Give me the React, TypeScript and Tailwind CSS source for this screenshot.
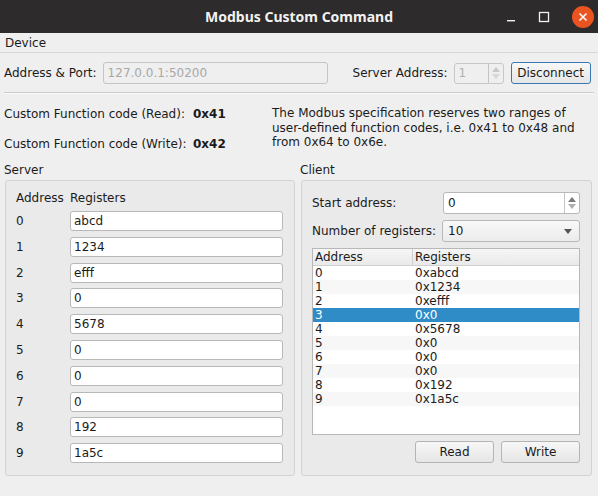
import React from 'react';

const serverRows = ['abcd', '1234', 'efff', '0', '5678', '0', '0', '0', '192', '1a5c'];
const clientRows = ['0xabcd', '0x1234', '0xefff', '0x0', '0x5678', '0x0', '0x0', '0x0', '0x192', '0x1a5c'];

// Small up/down arrows used by the spin boxes
const SpinArrows = ({ disabled }: { disabled?: boolean }) => (
  <div className="flex w-[15px] flex-col items-center justify-center gap-[2px] border-l border-[#c4c4c4]">
    <svg width="8" height="5" viewBox="0 0 8 5">
      <path d="M4 0 L8 5 L0 5 Z" fill={disabled ? '#c8c8c8' : '#7a7a7a'} />
    </svg>
    <svg width="8" height="5" viewBox="0 0 8 5">
      <path d="M0 0 L8 0 L4 5 Z" fill={disabled ? '#d6d6d6' : '#b0b0b0'} />
    </svg>
  </div>
);

const QButton = ({ label, focus, className }: { label: string; focus?: boolean; className?: string }) => (
  <div
    className={`flex items-center justify-center rounded-[3px] border bg-gradient-to-b from-[#f7f7f7] to-[#e6e6e6] ${
      focus ? 'border-[#3a78b5]' : 'border-[#b4b4b4]'
    } ${className ?? ''}`}
  >
    {label}
  </div>
);

export default function App() {
  return (
    <div
      className="flex h-[496px] w-[598px] flex-col overflow-hidden bg-[#efefef] text-[12px] text-[#1b1b1b]"
      style={{ fontFamily: '"DejaVu Sans", "Noto Sans", sans-serif' }}
    >
      {/* Window title bar */}
      <div className="grid h-[33px] shrink-0 grid-cols-[1fr_auto_1fr] items-center bg-[#2d2b2b]">
        <div />
        <div className="text-[14px] font-bold text-[#f2f2f2]" style={{ fontFamily: '"Noto Sans", "DejaVu Sans", sans-serif' }}>
          Modbus Custom Command
        </div>
        <div className="flex items-center justify-end gap-[22px] pr-[4px]">
          <svg width="10" height="10" viewBox="0 0 10 10">
            <rect x="1" y="8" width="8" height="1.4" fill="#f2f2f2" />
          </svg>
          <svg width="12" height="12" viewBox="0 0 12 12">
            <rect x="1.5" y="1.5" width="9" height="9" fill="none" stroke="#f2f2f2" strokeWidth="1.3" />
          </svg>
          <svg width="22" height="22" viewBox="0 0 22 22">
            <circle cx="11" cy="11" r="11" fill="#e95420" />
            <path d="M7.5 7.5 L14.5 14.5 M14.5 7.5 L7.5 14.5" stroke="#ffffff" strokeWidth="1.6" />
          </svg>
        </div>
      </div>

      {/* Menu bar */}
      <div className="flex h-[20px] shrink-0 items-center border-b border-[#d6d6d6] px-[5px]">Device</div>

      {/* Connection row */}
      <div className="mt-[9px] flex h-[22px] items-center px-[4px]">
        <span>Address &amp; Port:</span>
        <div className="ml-[6px] flex h-[22px] w-[225px] items-center rounded-[3px] border border-[#c4c4c4] bg-[#efefef] px-[4px] text-[#a8a8a8]">
          127.0.0.1:50200
        </div>
        <span className="ml-[25px]">Server Address:</span>
        <div className="ml-[6px] flex h-[21px] w-[50px] rounded-[3px] border border-[#c8c8c8] bg-[#efefef]">
          <div className="flex flex-1 items-center px-[4px] text-[#b0b0b0]">1</div>
          <SpinArrows disabled />
        </div>
        <QButton label="Disconnect" focus className="ml-[7px] h-[22px] w-[80px]" />
      </div>

      <div className="mx-[4px] mt-[8px] border-t border-[#cbcbcb] border-b border-b-[#fafafa]" />

      {/* Function codes */}
      <div className="mt-[13px] flex px-[4px]">
        <div className="flex w-[268px] flex-col gap-[16px]">
          <div className="flex h-[14px] items-center">
            <span className="w-[189px]">Custom Function code (Read):</span>
            <span className="font-bold">0x41</span>
          </div>
          <div className="flex h-[14px] items-center">
            <span className="w-[189px]">Custom Function code (Write):</span>
            <span className="font-bold">0x42</span>
          </div>
        </div>
        <p className="-mt-[1px] w-[322px] leading-[14.5px]">
          The Modbus specification reserves two ranges of user-defined function codes, i.e. 0x41 to 0x48 and from 0x64 to 0x6e.
        </p>
      </div>

      {/* Server / Client groups */}
      <div className="mt-[10px] flex gap-[6px] px-[5px]">
        {/* Server */}
        <div className="flex w-[290px] flex-col">
          <div className="-ml-[1px] h-[19px]">Server</div>
          <div className="h-[296px] rounded-[3px] border border-[#d2d2d2] bg-[#eaeaea] pl-[10px] pr-[11px] pt-[8px]">
            <div className="flex h-[17px] items-center">
              <span className="w-[54px]">Address</span>
              <span>Registers</span>
            </div>
            <div className="mt-[5px] flex flex-col gap-[5.8px]">
              {serverRows.map((v, i) => (
                <div key={i} className="flex h-[20px] items-center">
                  <span className="w-[54px]">{i}</span>
                  <div className="flex h-[20px] flex-1 items-center rounded-[3px] border border-[#b8b8b8] bg-white px-[3px]">
                    {v}
                  </div>
                </div>
              ))}
            </div>
          </div>
        </div>

        {/* Client */}
        <div className="flex w-[291px] flex-col">
          <div className="-ml-[1px] h-[19px]">Client</div>
          <div className="flex h-[296px] flex-col rounded-[3px] border border-[#d2d2d2] bg-[#eaeaea] pl-[10px] pr-[11px] pt-[11px]">
            <div className="flex h-[22px] items-center">
              <span className="w-[131px]">Start address:</span>
              <div className="flex h-[22px] flex-1 rounded-[3px] border border-[#b8b8b8] bg-white">
                <div className="flex flex-1 items-center px-[4px]">0</div>
                <SpinArrows />
              </div>
            </div>
            <div className="mt-[6px] flex h-[22px] items-center">
              <span className="w-[130px]">Number of registers:</span>
              <div className="flex h-[22px] flex-1 items-center justify-between rounded-[3px] border border-[#b8b8b8] bg-gradient-to-b from-[#f8f8f8] to-[#ececec] pl-[5px] pr-[7px]">
                <span>10</span>
                <svg width="8" height="5" viewBox="0 0 8 5">
                  <path d="M0 0 L8 0 L4 5 Z" fill="#555" />
                </svg>
              </div>
            </div>

            {/* Register table */}
            <div className="mt-[6px] h-[187px] border border-[#b8b8b8] bg-white">
              <div className="flex h-[17px] items-center border-b border-[#cfcfcf] bg-gradient-to-b from-[#f6f6f6] to-[#e9e9e9]">
                <div className="flex h-full w-[100px] items-center border-r border-[#cfcfcf] pl-[2px]">Address</div>
                <div className="pl-[2px]">Registers</div>
              </div>
              {clientRows.map((v, i) => (
                <div
                  key={i}
                  className={`flex h-[14px] items-center leading-[14px] ${
                    i === 3 ? 'bg-[#308cc6] text-white' : i % 2 === 1 ? 'bg-[#f7f7f7]' : 'bg-white'
                  }`}
                >
                  <span className="w-[100px] pl-[2px]">{i}</span>
                  <span className="pl-[2px]">{v}</span>
                </div>
              ))}
            </div>

            <div className="mt-[6px] flex justify-end gap-[7px]">
              <QButton label="Read" className="h-[22px] w-[79px]" />
              <QButton label="Write" className="h-[22px] w-[79px]" />
            </div>
          </div>
        </div>
      </div>
    </div>
  );
}
